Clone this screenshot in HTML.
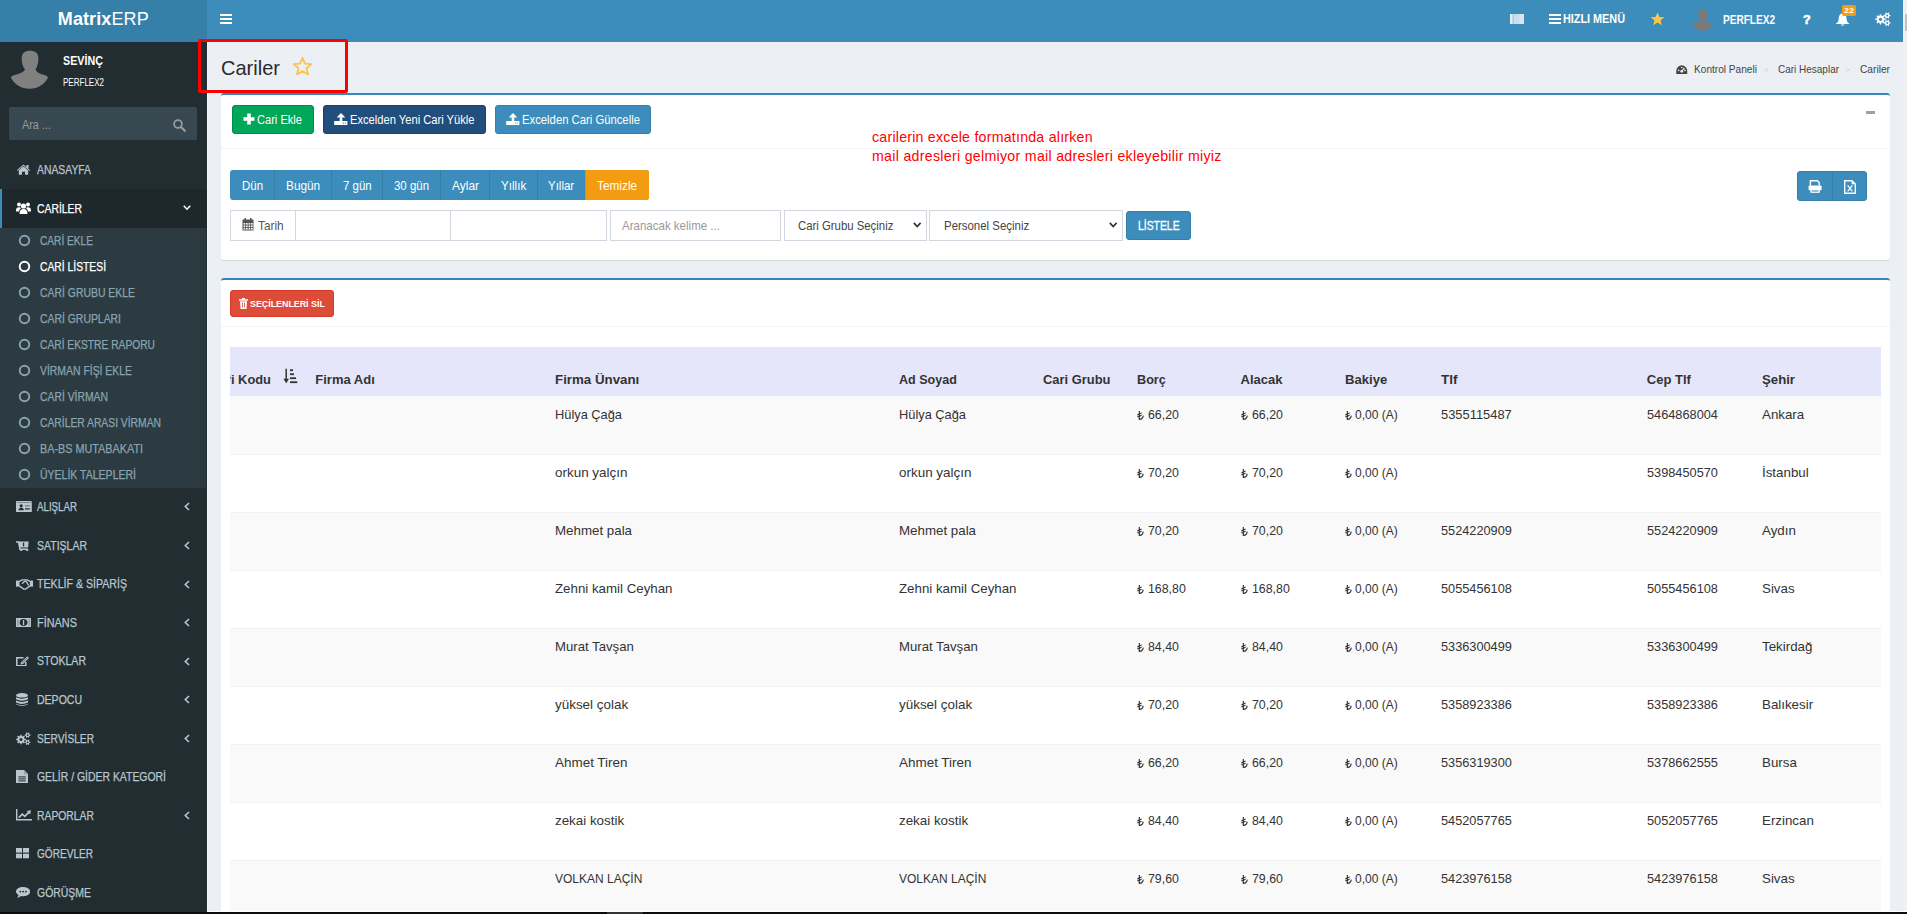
<!DOCTYPE html><html><head><meta charset="utf-8"><style>html,body{margin:0;padding:0;width:1907px;height:914px;overflow:hidden;font-family:"Liberation Sans",sans-serif;position:relative}</style></head><body><div style="position:absolute;left:0px;top:0px;width:1907px;height:914px;background:#ecf0f5;"></div>
<div style="position:absolute;left:0px;top:0px;width:207px;height:42px;background:#367fa9;"></div>
<div style="position:absolute;left:207px;top:0px;width:1696px;height:42px;background:#3c8dbc;"></div>
<div style="position:absolute;left:1903px;top:0px;width:4px;height:914px;background:#f1f1f1;"></div>
<div style="position:absolute;left:1905px;top:14px;width:2px;height:17px;background:#c1c1c1;"></div>
<div style="position:absolute;left:0px;top:42px;width:207px;height:872px;background:#222d32;"></div>
<div style="position:absolute;left:207px;top:42px;width:1px;height:872px;background:#f4f6f9;"></div>
<div style="position:absolute;left:57.8px;top:8.71px;font-size:18px;line-height:20.11px;color:#fff;font-weight:normal;white-space:nowrap;letter-spacing:0.1px;"><b>Matrix</b>ERP</div>
<svg style="position:absolute;left:220px;top:14px;" width="12" height="10" viewBox="0 0 12 10"><rect x="0" y="0" width="12" height="2" fill="#fff"/><rect x="0" y="4" width="12" height="2" fill="#fff"/><rect x="0" y="8" width="12" height="2" fill="#fff"/></svg>
<svg style="position:absolute;left:1509.5px;top:13.5px;" width="14" height="10.5" viewBox="0 0 14 10.5"><rect x="0" y="0" width="14" height="10.5" fill="#c9deec"/><rect x="0" y="0" width="2.2" height="10.5" fill="#e2edf5"/><rect x="2.6" y="0" width="1.2" height="10.5" fill="#a9c9df"/><rect x="9.5" y="0" width="1.5" height="10.5" fill="#dbe8f2"/><rect x="11.6" y="0" width="2.4" height="10.5" fill="#d9e7f1"/></svg>
<svg style="position:absolute;left:1549px;top:14px;" width="12" height="10" viewBox="0 0 12 10"><rect x="0" y="0" width="12" height="2" fill="#fff"/><rect x="0" y="4" width="12" height="2" fill="#fff"/><rect x="0" y="8" width="12" height="2" fill="#fff"/></svg>
<div style="position:absolute;left:1563px;top:13.29px;font-size:12.5px;line-height:13.96px;color:#fff;font-weight:bold;white-space:nowrap;transform:scaleX(0.8669);transform-origin:0 0;">HIZLI MENÜ</div>
<svg style="position:absolute;left:1650px;top:12px;" width="15" height="14" viewBox="0 0 15 14"><path d="M7.5 0.5 L9.4 5 L14.3 5.3 L10.5 8.5 L11.8 13.3 L7.5 10.6 L3.2 13.3 L4.5 8.5 L0.7 5.3 L5.6 5 Z" fill="#f8c94a"/></svg>
<svg style="position:absolute;left:1680px;top:0px;" width="50" height="40" viewBox="0 0 50 40"><path d="M20 24.6 C17.5 21 16.7 18 16.7 13 C16.7 8 20 5.7 25 5.7 C30 5.7 33.4 8 33.4 13 C33.4 18 32.5 21 30.6 24.6 C31 26.5 33 28 36 29 C40 30 42.9 31 42.9 32.8 C40 39 33 43.8 24.6 43.8 C16 43.8 9 39 6 32.8 C6 31 9 30 13 29 C17 28 19 26.5 20 24.6Z" fill="#7b7b7b" transform="translate(9 5.7) scale(0.55 0.575)"/></svg>
<div style="position:absolute;left:1723px;top:12.84px;font-size:13px;line-height:14.52px;color:#fff;font-weight:bold;white-space:nowrap;transform:scaleX(0.7740);transform-origin:0 0;">PERFLEX2</div>
<div style="position:absolute;left:1802.6px;top:11.98px;font-size:13.5px;line-height:15.08px;color:#fff;font-weight:bold;white-space:nowrap;transform:scaleX(0.9216);transform-origin:0 0;-webkit-text-stroke:0.7px #fff;">?</div>
<svg style="position:absolute;left:1836px;top:13px;" width="14" height="14" viewBox="0 0 14 14"><path d="M6.6 0.6 C9.6 0.6 10.5 3.2 10.6 6 C10.7 8.4 11.6 9.6 13.3 10.6 L13.3 11 L0 11 L0 10.6 C1.7 9.6 2.6 8.4 2.7 6 C2.8 3.2 3.6 0.6 6.6 0.6Z" fill="#fff"/><path d="M4.6 11.4 Q6.6 14.2 8.6 11.4Z" fill="#fff"/></svg>
<div style="position:absolute;left:1842px;top:5px;width:14px;height:11px;background:#f39c12;border-radius:2px;"></div>
<div style="position:absolute;left:1844px;top:6.76px;font-size:8px;line-height:8.94px;color:#fff;font-weight:bold;white-space:nowrap;transform:scaleX(1.1238);transform-origin:0 0;">22</div>
<svg style="position:absolute;left:1874px;top:10px;" width="18" height="18" viewBox="0 0 18 18"><path d="M10.21 8.49 L11.65 8.59 L11.65 10.01 L10.21 10.11 L9.70 11.35 L10.65 12.44 L9.64 13.45 L8.55 12.50 L7.31 13.01 L7.21 14.45 L5.79 14.45 L5.69 13.01 L4.45 12.50 L3.36 13.45 L2.35 12.44 L3.30 11.35 L2.79 10.11 L1.35 10.01 L1.35 8.59 L2.79 8.49 L3.30 7.25 L2.35 6.16 L3.36 5.15 L4.45 6.10 L5.69 5.59 L5.79 4.15 L7.21 4.15 L7.31 5.59 L8.55 6.10 L9.64 5.15 L10.65 6.16 L9.70 7.25Z" fill="#fff"/><circle cx="6.5" cy="9.3" r="1.6" fill="#3c8dbc"/><path d="M15.41 4.95 L16.44 5.00 L16.44 6.20 L15.41 6.25 L14.87 7.18 L15.34 8.11 L14.30 8.71 L13.74 7.84 L12.66 7.84 L12.10 8.71 L11.06 8.11 L11.53 7.18 L10.99 6.25 L9.96 6.20 L9.96 5.00 L10.99 4.95 L11.53 4.02 L11.06 3.09 L12.10 2.49 L12.66 3.36 L13.74 3.36 L14.30 2.49 L15.34 3.09 L14.87 4.02Z" fill="#fff"/><circle cx="13.2" cy="5.6" r="1.0" fill="#3c8dbc"/><path d="M15.41 12.35 L16.44 12.40 L16.44 13.60 L15.41 13.65 L14.87 14.58 L15.34 15.51 L14.30 16.11 L13.74 15.24 L12.66 15.24 L12.10 16.11 L11.06 15.51 L11.53 14.58 L10.99 13.65 L9.96 13.60 L9.96 12.40 L10.99 12.35 L11.53 11.42 L11.06 10.49 L12.10 9.89 L12.66 10.76 L13.74 10.76 L14.30 9.89 L15.34 10.49 L14.87 11.42Z" fill="#fff"/><circle cx="13.2" cy="13" r="1.0" fill="#3c8dbc"/></svg>
<svg style="position:absolute;left:5px;top:45px;" width="50" height="50" viewBox="0 0 50 50"><path d="M20 24.6 C17.5 21 16.7 18 16.7 13 C16.7 8 20 5.7 25 5.7 C30 5.7 33.4 8 33.4 13 C33.4 18 32.5 21 30.6 24.6 C31 26.5 33 28 36 29 C40 30 42.9 31 42.9 32.8 C40 39 33 43.8 24.6 43.8 C16 43.8 9 39 6 32.8 C6 31 9 30 13 29 C17 28 19 26.5 20 24.6Z" fill="#808080"/></svg>
<div style="position:absolute;left:63px;top:54.87px;font-size:12.3px;line-height:13.74px;color:#fff;font-weight:bold;white-space:nowrap;transform:scaleX(0.8734);transform-origin:0 0;">SEVİNÇ</div>
<div style="position:absolute;left:63px;top:76.95px;font-size:10px;line-height:11.17px;color:#fff;font-weight:normal;white-space:nowrap;transform:scaleX(0.8018);transform-origin:0 0;">PERFLEX2</div>
<div style="position:absolute;left:9px;top:107px;width:188px;height:33px;background:#374850;border-radius:2px;"></div>
<div style="position:absolute;left:22px;top:118.69px;font-size:12.5px;line-height:13.96px;color:#999;font-weight:normal;white-space:nowrap;transform:scaleX(0.8697);transform-origin:0 0;">Ara ...</div>
<svg style="position:absolute;left:173px;top:119px;" width="13" height="13" viewBox="0 0 13 13"><circle cx="5" cy="5" r="3.9" stroke="#999" stroke-width="1.8" fill="none"/><path d="M8 8 L11.8 11.8" stroke="#999" stroke-width="2.2" stroke-linecap="round"/></svg>
<svg style="position:absolute;left:16px;top:164px;" width="15" height="11" viewBox="0 0 15 11"><path d="M7.5 0.5 L0.5 6.5 L2 6.5 L7.5 1.8 L13 6.5 L14.5 6.5Z" fill="#b8c7ce"/><path d="M2.8 6.3 L7.5 2.5 L12.2 6.3 L12.2 10.8 L9 10.8 L9 7.8 L6 7.8 L6 10.8 L2.8 10.8Z" fill="#b8c7ce"/><rect x="10.5" y="1" width="2" height="3" fill="#b8c7ce"/></svg>
<div style="position:absolute;left:37px;top:164.14px;font-size:12px;line-height:13.40px;color:#b8c7ce;font-weight:normal;white-space:nowrap;transform:scaleX(0.8644);transform-origin:0 0;-webkit-text-stroke:0.25px #b8c7ce;">ANASAYFA</div>
<div style="position:absolute;left:0px;top:189px;width:207px;height:39px;background:#1e282c;"></div>
<div style="position:absolute;left:0px;top:189px;width:2px;height:39px;background:#3c8dbc;"></div>
<svg style="position:absolute;left:16px;top:202px;" width="15" height="12" viewBox="0 0 15 12"><g fill="#fff"><circle cx="7.5" cy="4" r="2.6"/><circle cx="3" cy="2.6" r="2"/><circle cx="12" cy="2.6" r="2"/><path d="M3.5 12 Q3.5 7 7.5 7 Q11.5 7 11.5 12Z"/><path d="M0 8.5 Q0 5.2 3 5.2 Q4.8 5.2 5 6.3 Q3 7.5 3 9.5 L0 9.5Z"/><path d="M15 8.5 Q15 5.2 12 5.2 Q10.2 5.2 10 6.3 Q12 7.5 12 9.5 L15 9.5Z"/></g></svg>
<div style="position:absolute;left:37px;top:203.14px;font-size:12px;line-height:13.40px;color:#fff;font-weight:normal;white-space:nowrap;transform:scaleX(0.8651);transform-origin:0 0;-webkit-text-stroke:0.25px #fff;">CARİLER</div>
<svg style="position:absolute;left:183px;top:205px;" width="8" height="6" viewBox="0 0 8 6"><path d="M0.8 0.8 L4 4.2 L7.2 0.8" stroke="#fff" stroke-width="1.6" fill="none"/></svg>
<div style="position:absolute;left:0px;top:228px;width:200px;height:260px;background:#2c3b41;"></div>
<div style="position:absolute;left:200px;top:228px;width:6px;height:260px;background:#2a373d;"></div>
<svg style="position:absolute;left:18px;top:233.7px;" width="13" height="13" viewBox="0 0 13 13"><circle cx="6.5" cy="6.5" r="4.75" stroke="#8aa4af" stroke-width="1.9" fill="none"/></svg>
<div style="position:absolute;left:40px;top:235.04px;font-size:12px;line-height:13.40px;color:#8aa4af;font-weight:normal;white-space:nowrap;transform:scaleX(0.8454);transform-origin:0 0;-webkit-text-stroke:0.25px #8aa4af;">CARİ EKLE</div>
<svg style="position:absolute;left:18px;top:259.7px;" width="13" height="13" viewBox="0 0 13 13"><circle cx="6.5" cy="6.5" r="4.75" stroke="#fff" stroke-width="1.9" fill="none"/></svg>
<div style="position:absolute;left:40px;top:261.04px;font-size:12px;line-height:13.40px;color:#fff;font-weight:normal;white-space:nowrap;transform:scaleX(0.8606);transform-origin:0 0;-webkit-text-stroke:0.25px #fff;">CARİ LİSTESİ</div>
<svg style="position:absolute;left:18px;top:285.7px;" width="13" height="13" viewBox="0 0 13 13"><circle cx="6.5" cy="6.5" r="4.75" stroke="#8aa4af" stroke-width="1.9" fill="none"/></svg>
<div style="position:absolute;left:40px;top:287.04px;font-size:12px;line-height:13.40px;color:#8aa4af;font-weight:normal;white-space:nowrap;transform:scaleX(0.8687);transform-origin:0 0;-webkit-text-stroke:0.25px #8aa4af;">CARİ GRUBU EKLE</div>
<svg style="position:absolute;left:18px;top:311.7px;" width="13" height="13" viewBox="0 0 13 13"><circle cx="6.5" cy="6.5" r="4.75" stroke="#8aa4af" stroke-width="1.9" fill="none"/></svg>
<div style="position:absolute;left:40px;top:313.04px;font-size:12px;line-height:13.40px;color:#8aa4af;font-weight:normal;white-space:nowrap;transform:scaleX(0.8677);transform-origin:0 0;-webkit-text-stroke:0.25px #8aa4af;">CARİ GRUPLARI</div>
<svg style="position:absolute;left:18px;top:337.7px;" width="13" height="13" viewBox="0 0 13 13"><circle cx="6.5" cy="6.5" r="4.75" stroke="#8aa4af" stroke-width="1.9" fill="none"/></svg>
<div style="position:absolute;left:40px;top:339.04px;font-size:12px;line-height:13.40px;color:#8aa4af;font-weight:normal;white-space:nowrap;transform:scaleX(0.8538);transform-origin:0 0;-webkit-text-stroke:0.25px #8aa4af;">CARİ EKSTRE RAPORU</div>
<svg style="position:absolute;left:18px;top:363.7px;" width="13" height="13" viewBox="0 0 13 13"><circle cx="6.5" cy="6.5" r="4.75" stroke="#8aa4af" stroke-width="1.9" fill="none"/></svg>
<div style="position:absolute;left:40px;top:365.04px;font-size:12px;line-height:13.40px;color:#8aa4af;font-weight:normal;white-space:nowrap;transform:scaleX(0.8677);transform-origin:0 0;-webkit-text-stroke:0.25px #8aa4af;">VİRMAN FİŞİ EKLE</div>
<svg style="position:absolute;left:18px;top:389.7px;" width="13" height="13" viewBox="0 0 13 13"><circle cx="6.5" cy="6.5" r="4.75" stroke="#8aa4af" stroke-width="1.9" fill="none"/></svg>
<div style="position:absolute;left:40px;top:391.04px;font-size:12px;line-height:13.40px;color:#8aa4af;font-weight:normal;white-space:nowrap;transform:scaleX(0.8643);transform-origin:0 0;-webkit-text-stroke:0.25px #8aa4af;">CARİ VİRMAN</div>
<svg style="position:absolute;left:18px;top:415.7px;" width="13" height="13" viewBox="0 0 13 13"><circle cx="6.5" cy="6.5" r="4.75" stroke="#8aa4af" stroke-width="1.9" fill="none"/></svg>
<div style="position:absolute;left:40px;top:417.04px;font-size:12px;line-height:13.40px;color:#8aa4af;font-weight:normal;white-space:nowrap;transform:scaleX(0.8600);transform-origin:0 0;-webkit-text-stroke:0.25px #8aa4af;">CARİLER ARASI VİRMAN</div>
<svg style="position:absolute;left:18px;top:441.7px;" width="13" height="13" viewBox="0 0 13 13"><circle cx="6.5" cy="6.5" r="4.75" stroke="#8aa4af" stroke-width="1.9" fill="none"/></svg>
<div style="position:absolute;left:40px;top:443.04px;font-size:12px;line-height:13.40px;color:#8aa4af;font-weight:normal;white-space:nowrap;transform:scaleX(0.9016);transform-origin:0 0;-webkit-text-stroke:0.25px #8aa4af;">BA-BS MUTABAKATI</div>
<svg style="position:absolute;left:18px;top:467.7px;" width="13" height="13" viewBox="0 0 13 13"><circle cx="6.5" cy="6.5" r="4.75" stroke="#8aa4af" stroke-width="1.9" fill="none"/></svg>
<div style="position:absolute;left:40px;top:469.04px;font-size:12px;line-height:13.40px;color:#8aa4af;font-weight:normal;white-space:nowrap;transform:scaleX(0.8758);transform-origin:0 0;-webkit-text-stroke:0.25px #8aa4af;">ÜYELİK TALEPLERİ</div>
<div style="position:absolute;left:37px;top:501.04px;font-size:12px;line-height:13.40px;color:#b8c7ce;font-weight:normal;white-space:nowrap;transform:scaleX(0.8104);transform-origin:0 0;-webkit-text-stroke:0.25px #b8c7ce;">ALIŞLAR</div>
<svg style="position:absolute;left:184px;top:502.4px;" width="6" height="9" viewBox="0 0 6 9"><path d="M5 1 L1.3 4.5 L5 8" stroke="#b8c7ce" stroke-width="1.6" fill="none"/></svg>
<div style="position:absolute;left:37px;top:539.64px;font-size:12px;line-height:13.40px;color:#b8c7ce;font-weight:normal;white-space:nowrap;transform:scaleX(0.8752);transform-origin:0 0;-webkit-text-stroke:0.25px #b8c7ce;">SATIŞLAR</div>
<svg style="position:absolute;left:184px;top:541.0px;" width="6" height="9" viewBox="0 0 6 9"><path d="M5 1 L1.3 4.5 L5 8" stroke="#b8c7ce" stroke-width="1.6" fill="none"/></svg>
<div style="position:absolute;left:37px;top:578.24px;font-size:12px;line-height:13.40px;color:#b8c7ce;font-weight:normal;white-space:nowrap;transform:scaleX(0.8840);transform-origin:0 0;-webkit-text-stroke:0.25px #b8c7ce;">TEKLİF &amp; SİPARİŞ</div>
<svg style="position:absolute;left:184px;top:579.6px;" width="6" height="9" viewBox="0 0 6 9"><path d="M5 1 L1.3 4.5 L5 8" stroke="#b8c7ce" stroke-width="1.6" fill="none"/></svg>
<div style="position:absolute;left:37px;top:616.84px;font-size:12px;line-height:13.40px;color:#b8c7ce;font-weight:normal;white-space:nowrap;transform:scaleX(0.9090);transform-origin:0 0;-webkit-text-stroke:0.25px #b8c7ce;">FİNANS</div>
<svg style="position:absolute;left:184px;top:618.2px;" width="6" height="9" viewBox="0 0 6 9"><path d="M5 1 L1.3 4.5 L5 8" stroke="#b8c7ce" stroke-width="1.6" fill="none"/></svg>
<div style="position:absolute;left:37px;top:655.44px;font-size:12px;line-height:13.40px;color:#b8c7ce;font-weight:normal;white-space:nowrap;transform:scaleX(0.8781);transform-origin:0 0;-webkit-text-stroke:0.25px #b8c7ce;">STOKLAR</div>
<svg style="position:absolute;left:184px;top:656.8px;" width="6" height="9" viewBox="0 0 6 9"><path d="M5 1 L1.3 4.5 L5 8" stroke="#b8c7ce" stroke-width="1.6" fill="none"/></svg>
<div style="position:absolute;left:37px;top:694.04px;font-size:12px;line-height:13.40px;color:#b8c7ce;font-weight:normal;white-space:nowrap;transform:scaleX(0.8765);transform-origin:0 0;-webkit-text-stroke:0.25px #b8c7ce;">DEPOCU</div>
<svg style="position:absolute;left:184px;top:695.4px;" width="6" height="9" viewBox="0 0 6 9"><path d="M5 1 L1.3 4.5 L5 8" stroke="#b8c7ce" stroke-width="1.6" fill="none"/></svg>
<div style="position:absolute;left:37px;top:732.64px;font-size:12px;line-height:13.40px;color:#b8c7ce;font-weight:normal;white-space:nowrap;transform:scaleX(0.8489);transform-origin:0 0;-webkit-text-stroke:0.25px #b8c7ce;">SERVİSLER</div>
<svg style="position:absolute;left:184px;top:734.0px;" width="6" height="9" viewBox="0 0 6 9"><path d="M5 1 L1.3 4.5 L5 8" stroke="#b8c7ce" stroke-width="1.6" fill="none"/></svg>
<div style="position:absolute;left:37px;top:771.24px;font-size:12px;line-height:13.40px;color:#b8c7ce;font-weight:normal;white-space:nowrap;transform:scaleX(0.8689);transform-origin:0 0;-webkit-text-stroke:0.25px #b8c7ce;">GELİR / GİDER KATEGORİ</div>
<div style="position:absolute;left:37px;top:809.84px;font-size:12px;line-height:13.40px;color:#b8c7ce;font-weight:normal;white-space:nowrap;transform:scaleX(0.8634);transform-origin:0 0;-webkit-text-stroke:0.25px #b8c7ce;">RAPORLAR</div>
<svg style="position:absolute;left:184px;top:811.2px;" width="6" height="9" viewBox="0 0 6 9"><path d="M5 1 L1.3 4.5 L5 8" stroke="#b8c7ce" stroke-width="1.6" fill="none"/></svg>
<div style="position:absolute;left:37px;top:848.44px;font-size:12px;line-height:13.40px;color:#b8c7ce;font-weight:normal;white-space:nowrap;transform:scaleX(0.8397);transform-origin:0 0;-webkit-text-stroke:0.25px #b8c7ce;">GÖREVLER</div>
<div style="position:absolute;left:37px;top:887.04px;font-size:12px;line-height:13.40px;color:#b8c7ce;font-weight:normal;white-space:nowrap;transform:scaleX(0.8709);transform-origin:0 0;-webkit-text-stroke:0.25px #b8c7ce;">GÖRÜŞME</div>
<svg style="position:absolute;left:16px;top:500.7px;" width="15.8" height="11.4" viewBox="0 0 15.8 11.4"><rect x="0" y="0" width="15.8" height="11.4" rx="0.9" fill="#b8c7ce"/><rect x="1" y="1.2" width="13.8" height="0.7" fill="#222d32" opacity="0.55"/><circle cx="5.2" cy="4.8" r="1.6" fill="#222d32"/><path d="M2.5 9.3 Q2.6 6.7 5.2 6.7 Q7.8 6.7 7.9 9.3Z" fill="#222d32"/><rect x="9" y="4.2" width="4.8" height="1.2" fill="#222d32" opacity="0.5"/><rect x="9" y="7.3" width="4.8" height="1.2" fill="#222d32"/></svg>
<svg style="position:absolute;left:16px;top:540.6px;" width="12.7" height="10.2" viewBox="0 0 12.7 10.2"><path d="M0 0.9 L2.6 0.9 L3.9 8.2 L12 8.2" stroke="#b8c7ce" stroke-width="1.5" fill="none"/><path d="M2.6 0.6 L12.7 0.6 L12.1 6.4 L3.4 6.4Z" fill="#b8c7ce"/><rect x="6.9" y="1.6" width="1.3" height="3.8" fill="#222d32"/><rect x="4.2" y="8" width="2" height="2.2" fill="#b8c7ce"/><rect x="10.2" y="8" width="2" height="2.2" fill="#b8c7ce"/></svg>
<svg style="position:absolute;left:16px;top:579.2px;" width="17.4" height="10.8" viewBox="0 0 17.4 10.8"><rect x="0" y="1.6" width="2.8" height="6" fill="#b8c7ce"/><rect x="14.6" y="1.6" width="2.8" height="6" fill="#b8c7ce"/><path d="M2.8 2.6 L6.2 0.9 L11.2 0.9 L14.6 2.6 L14.6 6.6 L9.6 10.1 L7.8 10.1 L2.8 6.6Z" fill="none" stroke="#b8c7ce" stroke-width="1.4"/><path d="M6 4.8 L8.6 2.2 L10.4 2.6 L12.6 6.4" stroke="#b8c7ce" stroke-width="1.3" fill="none"/></svg>
<svg style="position:absolute;left:16px;top:617.6px;" width="15.1" height="9.2" viewBox="0 0 15.1 9.2"><rect x="0" y="0" width="15.1" height="9.2" fill="#b8c7ce"/><ellipse cx="7.55" cy="4.6" rx="3.9" ry="3.5" fill="#222d32"/><rect x="6.9" y="2.1" width="1.3" height="5" fill="#b8c7ce"/><rect x="1.3" y="1.2" width="1.2" height="6.8" fill="#222d32" opacity="0.35"/><rect x="12.6" y="1.2" width="1.2" height="6.8" fill="#222d32" opacity="0.35"/></svg>
<svg style="position:absolute;left:16px;top:655.5px;" width="13.3" height="10.4" viewBox="0 0 13.3 10.4"><path d="M7.5 1.8 L0.8 1.8 L0.8 9.7 L9.8 9.7 L9.8 6" stroke="#b8c7ce" stroke-width="1.5" fill="none"/><path d="M11.3 0.2 L13.1 2 L7 8.1 L4.6 8.6 L5.1 6.2Z" fill="#b8c7ce"/><path d="M6.2 6.9 L11.6 1.5" stroke="#222d32" stroke-width="0.6"/></svg>
<svg style="position:absolute;left:16px;top:692.7px;" width="12" height="13.2" viewBox="0 0 12 13.2"><g fill="#b8c7ce"><ellipse cx="6" cy="2.3" rx="6" ry="2.3"/><path d="M0 4.2 Q6 7.2 12 4.2 L12 6.3 Q6 9.3 0 6.3Z"/><path d="M0 7.5 Q6 10.5 12 7.5 L12 9.6 Q6 12.6 0 9.6Z"/><path d="M0 10.8 Q6 13.8 12 10.8 L12 11.2 Q6 14.6 0 11.2Z"/></g></svg>
<svg style="position:absolute;left:16px;top:731.6px;" width="14.6" height="13.4" viewBox="0 0 14.6 13.4"><path d="M8.52 6.73 L9.85 6.83 L9.85 8.17 L8.52 8.27 L8.03 9.44 L8.91 10.46 L7.96 11.41 L6.94 10.53 L5.77 11.02 L5.67 12.35 L4.33 12.35 L4.23 11.02 L3.06 10.53 L2.04 11.41 L1.09 10.46 L1.97 9.44 L1.48 8.27 L0.15 8.17 L0.15 6.83 L1.48 6.73 L1.97 5.56 L1.09 4.54 L2.04 3.59 L3.06 4.47 L4.23 3.98 L4.33 2.65 L5.67 2.65 L5.77 3.98 L6.94 4.47 L7.96 3.59 L8.91 4.54 L8.03 5.56Z" fill="#b8c7ce"/><circle cx="5" cy="7.5" r="1.5" fill="#222d32"/><path d="M13.52 2.53 L14.45 2.57 L14.45 3.63 L13.52 3.67 L13.05 4.48 L13.48 5.31 L12.57 5.83 L12.07 5.04 L11.13 5.04 L10.63 5.83 L9.72 5.31 L10.15 4.48 L9.68 3.67 L8.75 3.63 L8.75 2.57 L9.68 2.53 L10.15 1.72 L9.72 0.89 L10.63 0.37 L11.13 1.16 L12.07 1.16 L12.57 0.37 L13.48 0.89 L13.05 1.72Z" fill="#b8c7ce"/><circle cx="11.6" cy="3.1" r="0.9" fill="#222d32"/><path d="M13.52 9.73 L14.45 9.77 L14.45 10.83 L13.52 10.87 L13.05 11.68 L13.48 12.51 L12.57 13.03 L12.07 12.24 L11.13 12.24 L10.63 13.03 L9.72 12.51 L10.15 11.68 L9.68 10.87 L8.75 10.83 L8.75 9.77 L9.68 9.73 L10.15 8.92 L9.72 8.09 L10.63 7.57 L11.13 8.36 L12.07 8.36 L12.57 7.57 L13.48 8.09 L13.05 8.92Z" fill="#b8c7ce"/><circle cx="11.6" cy="10.3" r="0.9" fill="#222d32"/></svg>
<svg style="position:absolute;left:16px;top:769.6px;" width="12.2" height="13.4" viewBox="0 0 12.2 13.4"><path d="M0 0 L8 0 L12.2 4.2 L12.2 13.4 L0 13.4Z" fill="#b8c7ce"/><path d="M8 0 L8 4.2 L12.2 4.2" fill="#8fa1ab"/><rect x="2.4" y="6.4" width="7.4" height="1" fill="#222d32"/><rect x="2.4" y="8.4" width="7.4" height="1" fill="#222d32"/><rect x="2.4" y="10.4" width="7.4" height="1" fill="#222d32"/></svg>
<svg style="position:absolute;left:16px;top:809.3px;" width="16.1" height="11.5" viewBox="0 0 16.1 11.5"><path d="M0.7 0 L0.7 10.8 L16.1 10.8" stroke="#b8c7ce" stroke-width="1.4" fill="none"/><path d="M2.8 8.6 L6.3 5.1 L8.8 7.4 L13 3.2" stroke="#b8c7ce" stroke-width="1.7" fill="none"/><path d="M10.8 2 L14.9 1.2 L14.2 5.4Z" fill="#b8c7ce"/></svg>
<svg style="position:absolute;left:16px;top:848.3px;" width="13" height="10.3" viewBox="0 0 13 10.3"><g fill="#b8c7ce"><rect x="0" y="0" width="6" height="4.6"/><rect x="7" y="0" width="6" height="4.6"/><rect x="0" y="5.7" width="6" height="4.6"/><rect x="7" y="5.7" width="6" height="4.6"/></g></svg>
<svg style="position:absolute;left:16px;top:887.3px;" width="14.2" height="10.7" viewBox="0 0 14.2 10.7"><path d="M7.1 0 C11 0 14.2 2 14.2 4.6 C14.2 7.2 11 9.2 7.1 9.2 C6.3 9.2 5.6 9.1 4.9 8.9 C3.8 9.9 2.5 10.5 1 10.7 C1.8 9.9 2.4 9 2.6 8.1 C1 7.3 0 6 0 4.6 C0 2 3.2 0 7.1 0Z" fill="#b8c7ce"/><circle cx="4.3" cy="4.6" r="0.95" fill="#222d32"/><circle cx="7.1" cy="4.6" r="0.95" fill="#222d32"/><circle cx="9.9" cy="4.6" r="0.95" fill="#222d32"/></svg>
<div style="position:absolute;left:221px;top:56.83px;font-size:20.3px;line-height:22.68px;color:#2a2a2a;font-weight:normal;white-space:nowrap;transform:scaleX(0.9869);transform-origin:0 0;">Cariler</div>
<svg style="position:absolute;left:292px;top:56px;" width="21" height="21" viewBox="0 0 21 21"><path d="M10.5 1.8 L13 7.6 L19.3 8.1 L14.5 12.2 L16 18.4 L10.5 15.1 L5 18.4 L6.5 12.2 L1.7 8.1 L8 7.6 Z" fill="none" stroke="#f8c54a" stroke-width="1.8" stroke-linejoin="round"/></svg>
<svg style="position:absolute;left:1676px;top:64.8px;" width="11.5" height="9.5" viewBox="0 0 11.5 9.5"><path d="M5.75 0.3 A5.45 5.45 0 0 1 11.2 5.75 L11.2 9.2 L0.3 9.2 L0.3 5.75 A5.45 5.45 0 0 1 5.75 0.3Z" fill="#444"/><circle cx="5.75" cy="6.3" r="1.4" fill="#ecf0f5"/><path d="M5.75 6.3 L8.4 2.8" stroke="#ecf0f5" stroke-width="1.1"/><circle cx="2.6" cy="5.4" r="0.8" fill="#ecf0f5"/><circle cx="5.75" cy="2.5" r="0.8" fill="#ecf0f5"/><circle cx="9" cy="5.4" r="0.8" fill="#ecf0f5"/></svg>
<div style="position:absolute;left:1694px;top:63.25px;font-size:11px;line-height:12.29px;color:#444;font-weight:normal;white-space:nowrap;transform:scaleX(0.9198);transform-origin:0 0;">Kontrol Paneli</div>
<div style="position:absolute;left:1764px;top:66.26px;font-size:8px;line-height:8.94px;color:#ccc;font-weight:normal;white-space:nowrap;">&gt;</div>
<div style="position:absolute;left:1778px;top:63.25px;font-size:11px;line-height:12.29px;color:#444;font-weight:normal;white-space:nowrap;transform:scaleX(0.9071);transform-origin:0 0;">Cari Hesaplar</div>
<div style="position:absolute;left:1845px;top:66.26px;font-size:8px;line-height:8.94px;color:#ccc;font-weight:normal;white-space:nowrap;">&gt;</div>
<div style="position:absolute;left:1860px;top:63.25px;font-size:11px;line-height:12.29px;color:#444;font-weight:normal;white-space:nowrap;transform:scaleX(0.9261);transform-origin:0 0;">Cariler</div>
<div style="position:absolute;left:221px;top:93px;width:1669px;height:167px;background:#fff;border-top:2px solid #3586b9;box-sizing:border-box;border-radius:3px;box-shadow:0 1px 1px rgba(0,0,0,0.1);"></div>
<div style="position:absolute;left:221px;top:148px;width:1669px;height:1px;background:#f4f4f4;"></div>
<div style="position:absolute;left:1866px;top:111px;width:9px;height:2.5px;background:#97a0b3;"></div>
<div style="position:absolute;left:232px;top:105px;width:82px;height:29px;background:#00a65a;border-radius:3px;border:1px solid #008d4c;box-sizing:border-box;"></div>
<svg style="position:absolute;left:243px;top:113px;" width="12" height="12" viewBox="0 0 12 12"><rect x="4.2" y="0.5" width="3.6" height="11" fill="#fff"/><rect x="0.5" y="4.2" width="11" height="3.6" fill="#fff"/></svg>
<div style="position:absolute;left:257px;top:112.80px;font-size:12.6px;line-height:14.07px;color:#fff;font-weight:normal;white-space:nowrap;transform:scaleX(0.8804);transform-origin:0 0;">Cari Ekle</div>
<div style="position:absolute;left:323px;top:105px;width:163px;height:29px;background:#214e7d;border-radius:3px;border:1px solid #1a4169;box-sizing:border-box;"></div>
<svg style="position:absolute;left:334px;top:112px;" width="14" height="13" viewBox="0 0 14 13"><path d="M7 0.9 L11.3 5.6 L2.7 5.6Z" fill="#fff"/><rect x="5.7" y="5.3" width="2.6" height="4.2" fill="#fff"/><rect x="0.2" y="9" width="13.2" height="4" fill="#fff"/><circle cx="9.3" cy="11.1" r="0.55" fill="#214e7d"/><circle cx="11.2" cy="11.1" r="0.55" fill="#214e7d"/></svg>
<div style="position:absolute;left:349.5px;top:112.80px;font-size:12.6px;line-height:14.07px;color:#fff;font-weight:normal;white-space:nowrap;transform:scaleX(0.8864);transform-origin:0 0;">Excelden Yeni Cari Yükle</div>
<div style="position:absolute;left:495px;top:105px;width:156px;height:29px;background:#3c8dbc;border-radius:3px;border:1px solid #367fa9;box-sizing:border-box;"></div>
<svg style="position:absolute;left:506px;top:112px;" width="14" height="13" viewBox="0 0 14 13"><path d="M7 0.9 L11.3 5.6 L2.7 5.6Z" fill="#fff"/><rect x="5.7" y="5.3" width="2.6" height="4.2" fill="#fff"/><rect x="0.2" y="9" width="13.2" height="4" fill="#fff"/><circle cx="9.3" cy="11.1" r="0.55" fill="#3c8dbc"/><circle cx="11.2" cy="11.1" r="0.55" fill="#3c8dbc"/></svg>
<div style="position:absolute;left:521.7px;top:112.80px;font-size:12.6px;line-height:14.07px;color:#fff;font-weight:normal;white-space:nowrap;transform:scaleX(0.8962);transform-origin:0 0;">Excelden Cari Güncelle</div>
<div style="position:absolute;left:872px;top:129.95px;font-size:14.2px;line-height:15.86px;color:#ff0000;font-weight:normal;white-space:nowrap;letter-spacing:0.226px;">carilerin excele formatında alırken</div>
<div style="position:absolute;left:872px;top:149.05px;font-size:14.2px;line-height:15.86px;color:#ff0000;font-weight:normal;white-space:nowrap;letter-spacing:0.289px;">mail adresleri gelmiyor mail adresleri ekleyebilir miyiz</div>
<div style="position:absolute;left:230px;top:170px;width:419px;height:30px;background:#3c8dbc;border-radius:3px;"></div>
<div style="position:absolute;left:585px;top:170px;width:64px;height:30px;background:#f39c12;border-radius:0 3px 3px 0;"></div>
<div style="position:absolute;left:274px;top:170px;width:1px;height:30px;background:#367fa9;"></div>
<div style="position:absolute;left:331px;top:170px;width:1px;height:30px;background:#367fa9;"></div>
<div style="position:absolute;left:382px;top:170px;width:1px;height:30px;background:#367fa9;"></div>
<div style="position:absolute;left:440px;top:170px;width:1px;height:30px;background:#367fa9;"></div>
<div style="position:absolute;left:489px;top:170px;width:1px;height:30px;background:#367fa9;"></div>
<div style="position:absolute;left:537px;top:170px;width:1px;height:30px;background:#367fa9;"></div>
<div style="position:absolute;left:585px;top:170px;width:1px;height:30px;background:#e08e0b;"></div>
<div style="position:absolute;left:241.6px;top:178.94px;font-size:13px;line-height:14.52px;color:#fff;font-weight:normal;white-space:nowrap;transform:scaleX(0.8805);transform-origin:0 0;">Dün</div>
<div style="position:absolute;left:285.8px;top:178.94px;font-size:13px;line-height:14.52px;color:#fff;font-weight:normal;white-space:nowrap;transform:scaleX(0.9098);transform-origin:0 0;">Bugün</div>
<div style="position:absolute;left:342.8px;top:178.94px;font-size:13px;line-height:14.52px;color:#fff;font-weight:normal;white-space:nowrap;transform:scaleX(0.8791);transform-origin:0 0;">7 gün</div>
<div style="position:absolute;left:394.2px;top:178.94px;font-size:13px;line-height:14.52px;color:#fff;font-weight:normal;white-space:nowrap;transform:scaleX(0.8802);transform-origin:0 0;">30 gün</div>
<div style="position:absolute;left:451.8px;top:178.94px;font-size:13px;line-height:14.52px;color:#fff;font-weight:normal;white-space:nowrap;transform:scaleX(0.9188);transform-origin:0 0;">Aylar</div>
<div style="position:absolute;left:500.8px;top:178.94px;font-size:13px;line-height:14.52px;color:#fff;font-weight:normal;white-space:nowrap;transform:scaleX(0.8945);transform-origin:0 0;">Yıllık</div>
<div style="position:absolute;left:548.1px;top:178.94px;font-size:13px;line-height:14.52px;color:#fff;font-weight:normal;white-space:nowrap;transform:scaleX(0.8845);transform-origin:0 0;">Yıllar</div>
<div style="position:absolute;left:597.2px;top:178.94px;font-size:13px;line-height:14.52px;color:#fff;font-weight:normal;white-space:nowrap;transform:scaleX(0.9100);transform-origin:0 0;">Temizle</div>
<div style="position:absolute;left:230px;top:210px;width:66px;height:31px;background:#fff;border:1px solid #d2d6de;box-sizing:border-box;"></div>
<div style="position:absolute;left:295px;top:210px;width:156px;height:31px;background:#fff;border:1px solid #d2d6de;box-sizing:border-box;"></div>
<div style="position:absolute;left:450px;top:210px;width:157px;height:31px;background:#fff;border:1px solid #d2d6de;box-sizing:border-box;"></div>
<svg style="position:absolute;left:242px;top:218px;" width="12" height="13" viewBox="0 0 12 13"><rect x="0.5" y="1.5" width="11" height="11" fill="#555"/><rect x="2.5" y="0" width="1.5" height="3" fill="#555"/><rect x="8" y="0" width="1.5" height="3" fill="#555"/><rect x="1.6" y="5.0" width="1.6" height="1.6" fill="#fff"/><rect x="4.1" y="5.0" width="1.6" height="1.6" fill="#fff"/><rect x="6.6" y="5.0" width="1.6" height="1.6" fill="#fff"/><rect x="9.1" y="5.0" width="1.6" height="1.6" fill="#fff"/><rect x="1.6" y="7.5" width="1.6" height="1.6" fill="#fff"/><rect x="4.1" y="7.5" width="1.6" height="1.6" fill="#fff"/><rect x="6.6" y="7.5" width="1.6" height="1.6" fill="#fff"/><rect x="9.1" y="7.5" width="1.6" height="1.6" fill="#fff"/><rect x="1.6" y="10.0" width="1.6" height="1.6" fill="#fff"/><rect x="4.1" y="10.0" width="1.6" height="1.6" fill="#fff"/><rect x="6.6" y="10.0" width="1.6" height="1.6" fill="#fff"/><rect x="9.1" y="10.0" width="1.6" height="1.6" fill="#fff"/></svg>
<div style="position:absolute;left:257.5px;top:218.60px;font-size:12.6px;line-height:14.07px;color:#555;font-weight:normal;white-space:nowrap;transform:scaleX(0.9410);transform-origin:0 0;">Tarih</div>
<div style="position:absolute;left:610px;top:210px;width:171px;height:31px;background:#fff;border:1px solid #d2d6de;box-sizing:border-box;"></div>
<div style="position:absolute;left:622.2px;top:218.50px;font-size:12.6px;line-height:14.07px;color:#999;font-weight:normal;white-space:nowrap;transform:scaleX(0.9146);transform-origin:0 0;">Aranacak kelime ...</div>
<div style="position:absolute;left:784px;top:210px;width:143px;height:31px;background:#fff;border:1px solid #d2d6de;box-sizing:border-box;"></div>
<div style="position:absolute;left:798.4px;top:218.50px;font-size:12.6px;line-height:14.07px;color:#444;font-weight:normal;white-space:nowrap;transform:scaleX(0.9022);transform-origin:0 0;">Cari Grubu Seçiniz</div>
<svg style="position:absolute;left:913px;top:222px;" width="9" height="6" viewBox="0 0 9 6"><path d="M0.8 0.8 L4.2 4.5 L7.6 0.8" stroke="#333" stroke-width="1.7" fill="none"/></svg>
<div style="position:absolute;left:929px;top:210px;width:194px;height:31px;background:#fff;border:1px solid #d2d6de;box-sizing:border-box;"></div>
<div style="position:absolute;left:944.2px;top:218.50px;font-size:12.6px;line-height:14.07px;color:#444;font-weight:normal;white-space:nowrap;transform:scaleX(0.9078);transform-origin:0 0;">Personel Seçiniz</div>
<svg style="position:absolute;left:1108.5px;top:222px;" width="9" height="6" viewBox="0 0 9 6"><path d="M0.8 0.8 L4.2 4.5 L7.6 0.8" stroke="#333" stroke-width="1.7" fill="none"/></svg>
<div style="position:absolute;left:1126px;top:211px;width:65px;height:29px;background:#3c8dbc;border-radius:3px;border:1px solid #367fa9;box-sizing:border-box;"></div>
<div style="position:absolute;left:1137.8px;top:218.80px;font-size:12.6px;line-height:14.07px;color:#fff;font-weight:normal;white-space:nowrap;transform:scaleX(0.8250);transform-origin:0 0;-webkit-text-stroke:0.3px #fff;">LİSTELE</div>
<div style="position:absolute;left:1797px;top:171px;width:36px;height:30px;background:#3c8dbc;border-radius:3px 0 0 3px;border:1px solid #367fa9;box-sizing:border-box;"></div>
<div style="position:absolute;left:1832px;top:171px;width:35px;height:30px;background:#3c8dbc;border-radius:0 3px 3px 0;border:1px solid #367fa9;box-sizing:border-box;"></div>
<svg style="position:absolute;left:1808px;top:180px;" width="14" height="13" viewBox="0 0 14 13"><path d="M2.4 5.6 L2.4 0.8 L9.4 0.8 L11.2 2.6 L11.2 5.6" fill="none" stroke="#fff" stroke-width="1.4"/><rect x="0.6" y="5.4" width="13" height="4.8" fill="#fff" rx="0.8"/><rect x="3.1" y="9.6" width="8" height="2.6" fill="none" stroke="#fff" stroke-width="1.3"/></svg>
<svg style="position:absolute;left:1844px;top:179.5px;" width="12" height="14" viewBox="0 0 12 14"><path d="M0.7 0.7 L8 0.7 L11.3 4 L11.3 13.3 L0.7 13.3Z" fill="none" stroke="#fff" stroke-width="1.4"/><path d="M7.6 0.9 L11 4.3 L7.6 4.3Z" fill="#fff"/><path d="M3.6 5.4 L8.4 11.3 M8.4 5.4 L3.6 11.3" stroke="#fff" stroke-width="1.3"/></svg>
<div style="position:absolute;left:221px;top:278px;width:1669px;height:640px;background:#fff;border-top:2px solid #3586b9;box-sizing:border-box;border-radius:3px;"></div>
<div style="position:absolute;left:230px;top:290px;width:104px;height:27px;background:#dd4b39;border-radius:3px;border:1px solid #d73925;box-sizing:border-box;"></div>
<svg style="position:absolute;left:239px;top:297.5px;" width="9" height="11" viewBox="0 0 9 11"><rect x="0" y="1.2" width="9" height="1.5" fill="#fff"/><rect x="3" y="0" width="3" height="1.5" fill="#fff"/><path d="M1 3.2 L8 3.2 L7.5 11 L1.5 11Z" fill="#fff"/><rect x="3" y="4.5" width="0.8" height="5" fill="#dd4b39"/><rect x="5.2" y="4.5" width="0.8" height="5" fill="#dd4b39"/></svg>
<div style="position:absolute;left:250.3px;top:298.99px;font-size:9.4px;line-height:10.50px;color:#fff;font-weight:bold;white-space:nowrap;transform:scaleX(0.9447);transform-origin:0 0;">SEÇİLENLERİ SİL</div>
<div style="position:absolute;left:221px;top:326px;width:1669px;height:1px;background:#f4f4f4;"></div>
<div style="position:absolute;left:230px;top:347px;width:1651px;height:49px;background:#e6e6fa;"></div>
<div style="position:absolute;left:315.3px;top:373.44px;font-size:13px;line-height:14.52px;color:#333;font-weight:bold;white-space:nowrap;">Firma Adı</div>
<div style="position:absolute;left:555.1px;top:373.44px;font-size:13px;line-height:14.52px;color:#333;font-weight:bold;white-space:nowrap;transform:scaleX(1.0236);transform-origin:0 0;">Firma Ünvanı</div>
<div style="position:absolute;left:898.7px;top:373.44px;font-size:13px;line-height:14.52px;color:#333;font-weight:bold;white-space:nowrap;transform:scaleX(0.9657);transform-origin:0 0;">Ad Soyad</div>
<div style="position:absolute;left:1042.8px;top:373.44px;font-size:13px;line-height:14.52px;color:#333;font-weight:bold;white-space:nowrap;transform:scaleX(0.9927);transform-origin:0 0;">Cari Grubu</div>
<div style="position:absolute;left:1136.8px;top:373.44px;font-size:13px;line-height:14.52px;color:#333;font-weight:bold;white-space:nowrap;transform:scaleX(0.9724);transform-origin:0 0;">Borç</div>
<div style="position:absolute;left:1240.5px;top:373.44px;font-size:13px;line-height:14.52px;color:#333;font-weight:bold;white-space:nowrap;">Alacak</div>
<div style="position:absolute;left:1345px;top:373.44px;font-size:13px;line-height:14.52px;color:#333;font-weight:bold;white-space:nowrap;transform:scaleX(1.0090);transform-origin:0 0;">Bakiye</div>
<div style="position:absolute;left:1441.1px;top:373.44px;font-size:13px;line-height:14.52px;color:#333;font-weight:bold;white-space:nowrap;transform:scaleX(1.0389);transform-origin:0 0;">Tlf</div>
<div style="position:absolute;left:1646.8px;top:373.44px;font-size:13px;line-height:14.52px;color:#333;font-weight:bold;white-space:nowrap;">Cep Tlf</div>
<div style="position:absolute;left:1761.9px;top:373.44px;font-size:13px;line-height:14.52px;color:#333;font-weight:bold;white-space:nowrap;transform:scaleX(1.0150);transform-origin:0 0;">Şehir</div>
<div style="position:absolute;left:230px;top:347px;width:1px;height:49px;background:#e6e6fa;"></div>
<svg style="position:absolute;left:283px;top:368px;" width="16" height="16" viewBox="0 0 16 16"><path d="M3.2 0.8 L3.2 13.5" stroke="#333" stroke-width="1.5"/><path d="M0.4 10.8 L3.2 15.2 L6 10.8Z" fill="#333"/><rect x="7" y="1.3" width="3" height="1.8" fill="#333"/><rect x="7" y="5.3" width="4" height="1.8" fill="#333"/><rect x="7" y="9.3" width="6" height="1.8" fill="#333"/><rect x="7" y="13.3" width="7.3" height="1.8" fill="#333"/></svg>
<div style="position:absolute;left:230px;top:360px;width:60px;height:30px;overflow:hidden;">
<div style="position:absolute;left:-3.9px;top:13.43px;font-size:13px;line-height:14.52px;color:#333;font-weight:bold;white-space:nowrap;transform:scaleX(0.9870);transform-origin:0 0;">ri Kodu</div>
</div>
<div style="position:absolute;left:230px;top:396px;width:1651px;height:58px;background:#f9f9f9;"></div>
<div style="position:absolute;left:555px;top:407.74px;font-size:13px;line-height:14.52px;color:#333;font-weight:normal;white-space:nowrap;transform:scaleX(0.9863);transform-origin:0 0;">Hülya Çağa</div>
<div style="position:absolute;left:899px;top:407.74px;font-size:13px;line-height:14.52px;color:#333;font-weight:normal;white-space:nowrap;transform:scaleX(0.9863);transform-origin:0 0;">Hülya Çağa</div>
<svg style="position:absolute;left:1137px;top:410.5px;" width="7" height="9" viewBox="0 0 7 9"><path d="M2.3 0 L2.3 8.3 Q5.8 8.3 6.2 4.6" stroke="#333" stroke-width="1.15" fill="none"/><path d="M0.3 3.9 L4.6 2.1 M0.3 6 L4.6 4.2" stroke="#333" stroke-width="1.05"/></svg>
<div style="position:absolute;left:1147.5px;top:407.74px;font-size:13px;line-height:14.52px;color:#333;font-weight:normal;white-space:nowrap;transform:scaleX(0.9500);transform-origin:0 0;">66,20</div>
<svg style="position:absolute;left:1241px;top:410.5px;" width="7" height="9" viewBox="0 0 7 9"><path d="M2.3 0 L2.3 8.3 Q5.8 8.3 6.2 4.6" stroke="#333" stroke-width="1.15" fill="none"/><path d="M0.3 3.9 L4.6 2.1 M0.3 6 L4.6 4.2" stroke="#333" stroke-width="1.05"/></svg>
<div style="position:absolute;left:1251.5px;top:407.74px;font-size:13px;line-height:14.52px;color:#333;font-weight:normal;white-space:nowrap;transform:scaleX(0.9500);transform-origin:0 0;">66,20</div>
<svg style="position:absolute;left:1345px;top:410.5px;" width="7" height="9" viewBox="0 0 7 9"><path d="M2.3 0 L2.3 8.3 Q5.8 8.3 6.2 4.6" stroke="#333" stroke-width="1.15" fill="none"/><path d="M0.3 3.9 L4.6 2.1 M0.3 6 L4.6 4.2" stroke="#333" stroke-width="1.05"/></svg>
<div style="position:absolute;left:1355.3px;top:407.74px;font-size:13px;line-height:14.52px;color:#333;font-weight:normal;white-space:nowrap;transform:scaleX(0.9234);transform-origin:0 0;">0,00 (A)</div>
<div style="position:absolute;left:1441px;top:407.74px;font-size:13px;line-height:14.52px;color:#333;font-weight:normal;white-space:nowrap;transform:scaleX(0.9925);transform-origin:0 0;">5355115487</div>
<div style="position:absolute;left:1647px;top:407.74px;font-size:13px;line-height:14.52px;color:#333;font-weight:normal;white-space:nowrap;transform:scaleX(0.9806);transform-origin:0 0;">5464868004</div>
<div style="position:absolute;left:1762px;top:407.74px;font-size:13px;line-height:14.52px;color:#333;font-weight:normal;white-space:nowrap;transform:scaleX(1.0250);transform-origin:0 0;">Ankara</div>
<div style="position:absolute;left:230px;top:454px;width:1651px;height:1px;background:#f2f2f2;"></div>
<div style="position:absolute;left:555px;top:465.74px;font-size:13px;line-height:14.52px;color:#333;font-weight:normal;white-space:nowrap;transform:scaleX(1.0343);transform-origin:0 0;">orkun yalçın</div>
<div style="position:absolute;left:899px;top:465.74px;font-size:13px;line-height:14.52px;color:#333;font-weight:normal;white-space:nowrap;transform:scaleX(1.0343);transform-origin:0 0;">orkun yalçın</div>
<svg style="position:absolute;left:1137px;top:468.5px;" width="7" height="9" viewBox="0 0 7 9"><path d="M2.3 0 L2.3 8.3 Q5.8 8.3 6.2 4.6" stroke="#333" stroke-width="1.15" fill="none"/><path d="M0.3 3.9 L4.6 2.1 M0.3 6 L4.6 4.2" stroke="#333" stroke-width="1.05"/></svg>
<div style="position:absolute;left:1147.5px;top:465.74px;font-size:13px;line-height:14.52px;color:#333;font-weight:normal;white-space:nowrap;transform:scaleX(0.9500);transform-origin:0 0;">70,20</div>
<svg style="position:absolute;left:1241px;top:468.5px;" width="7" height="9" viewBox="0 0 7 9"><path d="M2.3 0 L2.3 8.3 Q5.8 8.3 6.2 4.6" stroke="#333" stroke-width="1.15" fill="none"/><path d="M0.3 3.9 L4.6 2.1 M0.3 6 L4.6 4.2" stroke="#333" stroke-width="1.05"/></svg>
<div style="position:absolute;left:1251.5px;top:465.74px;font-size:13px;line-height:14.52px;color:#333;font-weight:normal;white-space:nowrap;transform:scaleX(0.9500);transform-origin:0 0;">70,20</div>
<svg style="position:absolute;left:1345px;top:468.5px;" width="7" height="9" viewBox="0 0 7 9"><path d="M2.3 0 L2.3 8.3 Q5.8 8.3 6.2 4.6" stroke="#333" stroke-width="1.15" fill="none"/><path d="M0.3 3.9 L4.6 2.1 M0.3 6 L4.6 4.2" stroke="#333" stroke-width="1.05"/></svg>
<div style="position:absolute;left:1355.3px;top:465.74px;font-size:13px;line-height:14.52px;color:#333;font-weight:normal;white-space:nowrap;transform:scaleX(0.9234);transform-origin:0 0;">0,00 (A)</div>
<div style="position:absolute;left:1647px;top:465.74px;font-size:13px;line-height:14.52px;color:#333;font-weight:normal;white-space:nowrap;transform:scaleX(0.9806);transform-origin:0 0;">5398450570</div>
<div style="position:absolute;left:1762px;top:465.74px;font-size:13px;line-height:14.52px;color:#333;font-weight:normal;white-space:nowrap;transform:scaleX(1.0250);transform-origin:0 0;">İstanbul</div>
<div style="position:absolute;left:230px;top:512px;width:1651px;height:58px;background:#f9f9f9;"></div>
<div style="position:absolute;left:230px;top:512px;width:1651px;height:1px;background:#f2f2f2;"></div>
<div style="position:absolute;left:555px;top:523.74px;font-size:13px;line-height:14.52px;color:#333;font-weight:normal;white-space:nowrap;transform:scaleX(1.0246);transform-origin:0 0;">Mehmet pala</div>
<div style="position:absolute;left:899px;top:523.74px;font-size:13px;line-height:14.52px;color:#333;font-weight:normal;white-space:nowrap;transform:scaleX(1.0246);transform-origin:0 0;">Mehmet pala</div>
<svg style="position:absolute;left:1137px;top:526.5px;" width="7" height="9" viewBox="0 0 7 9"><path d="M2.3 0 L2.3 8.3 Q5.8 8.3 6.2 4.6" stroke="#333" stroke-width="1.15" fill="none"/><path d="M0.3 3.9 L4.6 2.1 M0.3 6 L4.6 4.2" stroke="#333" stroke-width="1.05"/></svg>
<div style="position:absolute;left:1147.5px;top:523.74px;font-size:13px;line-height:14.52px;color:#333;font-weight:normal;white-space:nowrap;transform:scaleX(0.9500);transform-origin:0 0;">70,20</div>
<svg style="position:absolute;left:1241px;top:526.5px;" width="7" height="9" viewBox="0 0 7 9"><path d="M2.3 0 L2.3 8.3 Q5.8 8.3 6.2 4.6" stroke="#333" stroke-width="1.15" fill="none"/><path d="M0.3 3.9 L4.6 2.1 M0.3 6 L4.6 4.2" stroke="#333" stroke-width="1.05"/></svg>
<div style="position:absolute;left:1251.5px;top:523.74px;font-size:13px;line-height:14.52px;color:#333;font-weight:normal;white-space:nowrap;transform:scaleX(0.9500);transform-origin:0 0;">70,20</div>
<svg style="position:absolute;left:1345px;top:526.5px;" width="7" height="9" viewBox="0 0 7 9"><path d="M2.3 0 L2.3 8.3 Q5.8 8.3 6.2 4.6" stroke="#333" stroke-width="1.15" fill="none"/><path d="M0.3 3.9 L4.6 2.1 M0.3 6 L4.6 4.2" stroke="#333" stroke-width="1.05"/></svg>
<div style="position:absolute;left:1355.3px;top:523.74px;font-size:13px;line-height:14.52px;color:#333;font-weight:normal;white-space:nowrap;transform:scaleX(0.9234);transform-origin:0 0;">0,00 (A)</div>
<div style="position:absolute;left:1441px;top:523.74px;font-size:13px;line-height:14.52px;color:#333;font-weight:normal;white-space:nowrap;transform:scaleX(0.9792);transform-origin:0 0;">5524220909</div>
<div style="position:absolute;left:1647px;top:523.74px;font-size:13px;line-height:14.52px;color:#333;font-weight:normal;white-space:nowrap;transform:scaleX(0.9806);transform-origin:0 0;">5524220909</div>
<div style="position:absolute;left:1762px;top:523.74px;font-size:13px;line-height:14.52px;color:#333;font-weight:normal;white-space:nowrap;transform:scaleX(1.0250);transform-origin:0 0;">Aydın</div>
<div style="position:absolute;left:230px;top:570px;width:1651px;height:1px;background:#f2f2f2;"></div>
<div style="position:absolute;left:555px;top:581.74px;font-size:13px;line-height:14.52px;color:#333;font-weight:normal;white-space:nowrap;transform:scaleX(1.0227);transform-origin:0 0;">Zehni kamil Ceyhan</div>
<div style="position:absolute;left:899px;top:581.74px;font-size:13px;line-height:14.52px;color:#333;font-weight:normal;white-space:nowrap;transform:scaleX(1.0227);transform-origin:0 0;">Zehni kamil Ceyhan</div>
<svg style="position:absolute;left:1137px;top:584.5px;" width="7" height="9" viewBox="0 0 7 9"><path d="M2.3 0 L2.3 8.3 Q5.8 8.3 6.2 4.6" stroke="#333" stroke-width="1.15" fill="none"/><path d="M0.3 3.9 L4.6 2.1 M0.3 6 L4.6 4.2" stroke="#333" stroke-width="1.05"/></svg>
<div style="position:absolute;left:1147.5px;top:581.74px;font-size:13px;line-height:14.52px;color:#333;font-weight:normal;white-space:nowrap;transform:scaleX(0.9500);transform-origin:0 0;">168,80</div>
<svg style="position:absolute;left:1241px;top:584.5px;" width="7" height="9" viewBox="0 0 7 9"><path d="M2.3 0 L2.3 8.3 Q5.8 8.3 6.2 4.6" stroke="#333" stroke-width="1.15" fill="none"/><path d="M0.3 3.9 L4.6 2.1 M0.3 6 L4.6 4.2" stroke="#333" stroke-width="1.05"/></svg>
<div style="position:absolute;left:1251.5px;top:581.74px;font-size:13px;line-height:14.52px;color:#333;font-weight:normal;white-space:nowrap;transform:scaleX(0.9500);transform-origin:0 0;">168,80</div>
<svg style="position:absolute;left:1345px;top:584.5px;" width="7" height="9" viewBox="0 0 7 9"><path d="M2.3 0 L2.3 8.3 Q5.8 8.3 6.2 4.6" stroke="#333" stroke-width="1.15" fill="none"/><path d="M0.3 3.9 L4.6 2.1 M0.3 6 L4.6 4.2" stroke="#333" stroke-width="1.05"/></svg>
<div style="position:absolute;left:1355.3px;top:581.74px;font-size:13px;line-height:14.52px;color:#333;font-weight:normal;white-space:nowrap;transform:scaleX(0.9234);transform-origin:0 0;">0,00 (A)</div>
<div style="position:absolute;left:1441px;top:581.74px;font-size:13px;line-height:14.52px;color:#333;font-weight:normal;white-space:nowrap;transform:scaleX(0.9792);transform-origin:0 0;">5055456108</div>
<div style="position:absolute;left:1647px;top:581.74px;font-size:13px;line-height:14.52px;color:#333;font-weight:normal;white-space:nowrap;transform:scaleX(0.9806);transform-origin:0 0;">5055456108</div>
<div style="position:absolute;left:1762px;top:581.74px;font-size:13px;line-height:14.52px;color:#333;font-weight:normal;white-space:nowrap;transform:scaleX(1.0250);transform-origin:0 0;">Sivas</div>
<div style="position:absolute;left:230px;top:628px;width:1651px;height:58px;background:#f9f9f9;"></div>
<div style="position:absolute;left:230px;top:628px;width:1651px;height:1px;background:#f2f2f2;"></div>
<div style="position:absolute;left:555px;top:639.74px;font-size:13px;line-height:14.52px;color:#333;font-weight:normal;white-space:nowrap;transform:scaleX(1.0129);transform-origin:0 0;">Murat Tavşan</div>
<div style="position:absolute;left:899px;top:639.74px;font-size:13px;line-height:14.52px;color:#333;font-weight:normal;white-space:nowrap;transform:scaleX(1.0129);transform-origin:0 0;">Murat Tavşan</div>
<svg style="position:absolute;left:1137px;top:642.5px;" width="7" height="9" viewBox="0 0 7 9"><path d="M2.3 0 L2.3 8.3 Q5.8 8.3 6.2 4.6" stroke="#333" stroke-width="1.15" fill="none"/><path d="M0.3 3.9 L4.6 2.1 M0.3 6 L4.6 4.2" stroke="#333" stroke-width="1.05"/></svg>
<div style="position:absolute;left:1147.5px;top:639.74px;font-size:13px;line-height:14.52px;color:#333;font-weight:normal;white-space:nowrap;transform:scaleX(0.9500);transform-origin:0 0;">84,40</div>
<svg style="position:absolute;left:1241px;top:642.5px;" width="7" height="9" viewBox="0 0 7 9"><path d="M2.3 0 L2.3 8.3 Q5.8 8.3 6.2 4.6" stroke="#333" stroke-width="1.15" fill="none"/><path d="M0.3 3.9 L4.6 2.1 M0.3 6 L4.6 4.2" stroke="#333" stroke-width="1.05"/></svg>
<div style="position:absolute;left:1251.5px;top:639.74px;font-size:13px;line-height:14.52px;color:#333;font-weight:normal;white-space:nowrap;transform:scaleX(0.9500);transform-origin:0 0;">84,40</div>
<svg style="position:absolute;left:1345px;top:642.5px;" width="7" height="9" viewBox="0 0 7 9"><path d="M2.3 0 L2.3 8.3 Q5.8 8.3 6.2 4.6" stroke="#333" stroke-width="1.15" fill="none"/><path d="M0.3 3.9 L4.6 2.1 M0.3 6 L4.6 4.2" stroke="#333" stroke-width="1.05"/></svg>
<div style="position:absolute;left:1355.3px;top:639.74px;font-size:13px;line-height:14.52px;color:#333;font-weight:normal;white-space:nowrap;transform:scaleX(0.9234);transform-origin:0 0;">0,00 (A)</div>
<div style="position:absolute;left:1441px;top:639.74px;font-size:13px;line-height:14.52px;color:#333;font-weight:normal;white-space:nowrap;transform:scaleX(0.9792);transform-origin:0 0;">5336300499</div>
<div style="position:absolute;left:1647px;top:639.74px;font-size:13px;line-height:14.52px;color:#333;font-weight:normal;white-space:nowrap;transform:scaleX(0.9806);transform-origin:0 0;">5336300499</div>
<div style="position:absolute;left:1762px;top:639.74px;font-size:13px;line-height:14.52px;color:#333;font-weight:normal;white-space:nowrap;transform:scaleX(1.0250);transform-origin:0 0;">Tekirdağ</div>
<div style="position:absolute;left:230px;top:686px;width:1651px;height:1px;background:#f2f2f2;"></div>
<div style="position:absolute;left:555px;top:697.74px;font-size:13px;line-height:14.52px;color:#333;font-weight:normal;white-space:nowrap;transform:scaleX(1.0323);transform-origin:0 0;">yüksel çolak</div>
<div style="position:absolute;left:899px;top:697.74px;font-size:13px;line-height:14.52px;color:#333;font-weight:normal;white-space:nowrap;transform:scaleX(1.0323);transform-origin:0 0;">yüksel çolak</div>
<svg style="position:absolute;left:1137px;top:700.5px;" width="7" height="9" viewBox="0 0 7 9"><path d="M2.3 0 L2.3 8.3 Q5.8 8.3 6.2 4.6" stroke="#333" stroke-width="1.15" fill="none"/><path d="M0.3 3.9 L4.6 2.1 M0.3 6 L4.6 4.2" stroke="#333" stroke-width="1.05"/></svg>
<div style="position:absolute;left:1147.5px;top:697.74px;font-size:13px;line-height:14.52px;color:#333;font-weight:normal;white-space:nowrap;transform:scaleX(0.9500);transform-origin:0 0;">70,20</div>
<svg style="position:absolute;left:1241px;top:700.5px;" width="7" height="9" viewBox="0 0 7 9"><path d="M2.3 0 L2.3 8.3 Q5.8 8.3 6.2 4.6" stroke="#333" stroke-width="1.15" fill="none"/><path d="M0.3 3.9 L4.6 2.1 M0.3 6 L4.6 4.2" stroke="#333" stroke-width="1.05"/></svg>
<div style="position:absolute;left:1251.5px;top:697.74px;font-size:13px;line-height:14.52px;color:#333;font-weight:normal;white-space:nowrap;transform:scaleX(0.9500);transform-origin:0 0;">70,20</div>
<svg style="position:absolute;left:1345px;top:700.5px;" width="7" height="9" viewBox="0 0 7 9"><path d="M2.3 0 L2.3 8.3 Q5.8 8.3 6.2 4.6" stroke="#333" stroke-width="1.15" fill="none"/><path d="M0.3 3.9 L4.6 2.1 M0.3 6 L4.6 4.2" stroke="#333" stroke-width="1.05"/></svg>
<div style="position:absolute;left:1355.3px;top:697.74px;font-size:13px;line-height:14.52px;color:#333;font-weight:normal;white-space:nowrap;transform:scaleX(0.9234);transform-origin:0 0;">0,00 (A)</div>
<div style="position:absolute;left:1441px;top:697.74px;font-size:13px;line-height:14.52px;color:#333;font-weight:normal;white-space:nowrap;transform:scaleX(0.9792);transform-origin:0 0;">5358923386</div>
<div style="position:absolute;left:1647px;top:697.74px;font-size:13px;line-height:14.52px;color:#333;font-weight:normal;white-space:nowrap;transform:scaleX(0.9806);transform-origin:0 0;">5358923386</div>
<div style="position:absolute;left:1762px;top:697.74px;font-size:13px;line-height:14.52px;color:#333;font-weight:normal;white-space:nowrap;transform:scaleX(1.0250);transform-origin:0 0;">Balıkesir</div>
<div style="position:absolute;left:230px;top:744px;width:1651px;height:58px;background:#f9f9f9;"></div>
<div style="position:absolute;left:230px;top:744px;width:1651px;height:1px;background:#f2f2f2;"></div>
<div style="position:absolute;left:555px;top:755.74px;font-size:13px;line-height:14.52px;color:#333;font-weight:normal;white-space:nowrap;transform:scaleX(1.0344);transform-origin:0 0;">Ahmet Tiren</div>
<div style="position:absolute;left:899px;top:755.74px;font-size:13px;line-height:14.52px;color:#333;font-weight:normal;white-space:nowrap;transform:scaleX(1.0344);transform-origin:0 0;">Ahmet Tiren</div>
<svg style="position:absolute;left:1137px;top:758.5px;" width="7" height="9" viewBox="0 0 7 9"><path d="M2.3 0 L2.3 8.3 Q5.8 8.3 6.2 4.6" stroke="#333" stroke-width="1.15" fill="none"/><path d="M0.3 3.9 L4.6 2.1 M0.3 6 L4.6 4.2" stroke="#333" stroke-width="1.05"/></svg>
<div style="position:absolute;left:1147.5px;top:755.74px;font-size:13px;line-height:14.52px;color:#333;font-weight:normal;white-space:nowrap;transform:scaleX(0.9500);transform-origin:0 0;">66,20</div>
<svg style="position:absolute;left:1241px;top:758.5px;" width="7" height="9" viewBox="0 0 7 9"><path d="M2.3 0 L2.3 8.3 Q5.8 8.3 6.2 4.6" stroke="#333" stroke-width="1.15" fill="none"/><path d="M0.3 3.9 L4.6 2.1 M0.3 6 L4.6 4.2" stroke="#333" stroke-width="1.05"/></svg>
<div style="position:absolute;left:1251.5px;top:755.74px;font-size:13px;line-height:14.52px;color:#333;font-weight:normal;white-space:nowrap;transform:scaleX(0.9500);transform-origin:0 0;">66,20</div>
<svg style="position:absolute;left:1345px;top:758.5px;" width="7" height="9" viewBox="0 0 7 9"><path d="M2.3 0 L2.3 8.3 Q5.8 8.3 6.2 4.6" stroke="#333" stroke-width="1.15" fill="none"/><path d="M0.3 3.9 L4.6 2.1 M0.3 6 L4.6 4.2" stroke="#333" stroke-width="1.05"/></svg>
<div style="position:absolute;left:1355.3px;top:755.74px;font-size:13px;line-height:14.52px;color:#333;font-weight:normal;white-space:nowrap;transform:scaleX(0.9234);transform-origin:0 0;">0,00 (A)</div>
<div style="position:absolute;left:1441px;top:755.74px;font-size:13px;line-height:14.52px;color:#333;font-weight:normal;white-space:nowrap;transform:scaleX(0.9792);transform-origin:0 0;">5356319300</div>
<div style="position:absolute;left:1647px;top:755.74px;font-size:13px;line-height:14.52px;color:#333;font-weight:normal;white-space:nowrap;transform:scaleX(0.9806);transform-origin:0 0;">5378662555</div>
<div style="position:absolute;left:1762px;top:755.74px;font-size:13px;line-height:14.52px;color:#333;font-weight:normal;white-space:nowrap;transform:scaleX(1.0250);transform-origin:0 0;">Bursa</div>
<div style="position:absolute;left:230px;top:802px;width:1651px;height:1px;background:#f2f2f2;"></div>
<div style="position:absolute;left:555px;top:813.74px;font-size:13px;line-height:14.52px;color:#333;font-weight:normal;white-space:nowrap;transform:scaleX(1.0284);transform-origin:0 0;">zekai kostik</div>
<div style="position:absolute;left:899px;top:813.74px;font-size:13px;line-height:14.52px;color:#333;font-weight:normal;white-space:nowrap;transform:scaleX(1.0284);transform-origin:0 0;">zekai kostik</div>
<svg style="position:absolute;left:1137px;top:816.5px;" width="7" height="9" viewBox="0 0 7 9"><path d="M2.3 0 L2.3 8.3 Q5.8 8.3 6.2 4.6" stroke="#333" stroke-width="1.15" fill="none"/><path d="M0.3 3.9 L4.6 2.1 M0.3 6 L4.6 4.2" stroke="#333" stroke-width="1.05"/></svg>
<div style="position:absolute;left:1147.5px;top:813.74px;font-size:13px;line-height:14.52px;color:#333;font-weight:normal;white-space:nowrap;transform:scaleX(0.9500);transform-origin:0 0;">84,40</div>
<svg style="position:absolute;left:1241px;top:816.5px;" width="7" height="9" viewBox="0 0 7 9"><path d="M2.3 0 L2.3 8.3 Q5.8 8.3 6.2 4.6" stroke="#333" stroke-width="1.15" fill="none"/><path d="M0.3 3.9 L4.6 2.1 M0.3 6 L4.6 4.2" stroke="#333" stroke-width="1.05"/></svg>
<div style="position:absolute;left:1251.5px;top:813.74px;font-size:13px;line-height:14.52px;color:#333;font-weight:normal;white-space:nowrap;transform:scaleX(0.9500);transform-origin:0 0;">84,40</div>
<svg style="position:absolute;left:1345px;top:816.5px;" width="7" height="9" viewBox="0 0 7 9"><path d="M2.3 0 L2.3 8.3 Q5.8 8.3 6.2 4.6" stroke="#333" stroke-width="1.15" fill="none"/><path d="M0.3 3.9 L4.6 2.1 M0.3 6 L4.6 4.2" stroke="#333" stroke-width="1.05"/></svg>
<div style="position:absolute;left:1355.3px;top:813.74px;font-size:13px;line-height:14.52px;color:#333;font-weight:normal;white-space:nowrap;transform:scaleX(0.9234);transform-origin:0 0;">0,00 (A)</div>
<div style="position:absolute;left:1441px;top:813.74px;font-size:13px;line-height:14.52px;color:#333;font-weight:normal;white-space:nowrap;transform:scaleX(0.9792);transform-origin:0 0;">5452057765</div>
<div style="position:absolute;left:1647px;top:813.74px;font-size:13px;line-height:14.52px;color:#333;font-weight:normal;white-space:nowrap;transform:scaleX(0.9806);transform-origin:0 0;">5052057765</div>
<div style="position:absolute;left:1762px;top:813.74px;font-size:13px;line-height:14.52px;color:#333;font-weight:normal;white-space:nowrap;transform:scaleX(1.0250);transform-origin:0 0;">Erzincan</div>
<div style="position:absolute;left:230px;top:860px;width:1651px;height:51px;background:#f9f9f9;"></div>
<div style="position:absolute;left:230px;top:860px;width:1651px;height:1px;background:#f2f2f2;"></div>
<div style="position:absolute;left:555px;top:871.74px;font-size:13px;line-height:14.52px;color:#333;font-weight:normal;white-space:nowrap;transform:scaleX(0.9224);transform-origin:0 0;">VOLKAN LAÇİN</div>
<div style="position:absolute;left:899px;top:871.74px;font-size:13px;line-height:14.52px;color:#333;font-weight:normal;white-space:nowrap;transform:scaleX(0.9224);transform-origin:0 0;">VOLKAN LAÇİN</div>
<svg style="position:absolute;left:1137px;top:874.5px;" width="7" height="9" viewBox="0 0 7 9"><path d="M2.3 0 L2.3 8.3 Q5.8 8.3 6.2 4.6" stroke="#333" stroke-width="1.15" fill="none"/><path d="M0.3 3.9 L4.6 2.1 M0.3 6 L4.6 4.2" stroke="#333" stroke-width="1.05"/></svg>
<div style="position:absolute;left:1147.5px;top:871.74px;font-size:13px;line-height:14.52px;color:#333;font-weight:normal;white-space:nowrap;transform:scaleX(0.9500);transform-origin:0 0;">79,60</div>
<svg style="position:absolute;left:1241px;top:874.5px;" width="7" height="9" viewBox="0 0 7 9"><path d="M2.3 0 L2.3 8.3 Q5.8 8.3 6.2 4.6" stroke="#333" stroke-width="1.15" fill="none"/><path d="M0.3 3.9 L4.6 2.1 M0.3 6 L4.6 4.2" stroke="#333" stroke-width="1.05"/></svg>
<div style="position:absolute;left:1251.5px;top:871.74px;font-size:13px;line-height:14.52px;color:#333;font-weight:normal;white-space:nowrap;transform:scaleX(0.9500);transform-origin:0 0;">79,60</div>
<svg style="position:absolute;left:1345px;top:874.5px;" width="7" height="9" viewBox="0 0 7 9"><path d="M2.3 0 L2.3 8.3 Q5.8 8.3 6.2 4.6" stroke="#333" stroke-width="1.15" fill="none"/><path d="M0.3 3.9 L4.6 2.1 M0.3 6 L4.6 4.2" stroke="#333" stroke-width="1.05"/></svg>
<div style="position:absolute;left:1355.3px;top:871.74px;font-size:13px;line-height:14.52px;color:#333;font-weight:normal;white-space:nowrap;transform:scaleX(0.9234);transform-origin:0 0;">0,00 (A)</div>
<div style="position:absolute;left:1441px;top:871.74px;font-size:13px;line-height:14.52px;color:#333;font-weight:normal;white-space:nowrap;transform:scaleX(0.9792);transform-origin:0 0;">5423976158</div>
<div style="position:absolute;left:1647px;top:871.74px;font-size:13px;line-height:14.52px;color:#333;font-weight:normal;white-space:nowrap;transform:scaleX(0.9806);transform-origin:0 0;">5423976158</div>
<div style="position:absolute;left:1762px;top:871.74px;font-size:13px;line-height:14.52px;color:#333;font-weight:normal;white-space:nowrap;transform:scaleX(1.0250);transform-origin:0 0;">Sivas</div>
<div style="position:absolute;left:207px;top:911px;width:1700px;height:1px;background:#ffffff;"></div>
<div style="position:absolute;left:0px;top:912px;width:1907px;height:2px;background:#0b0b0b;"></div>
<div style="position:absolute;left:607px;top:912px;width:36px;height:2px;background:#333;"></div>
<div style="position:absolute;left:198px;top:39px;width:150px;height:54px;background:transparent;border:3px solid #ff0000;box-sizing:border-box;border-radius:2px;"></div></body></html>
